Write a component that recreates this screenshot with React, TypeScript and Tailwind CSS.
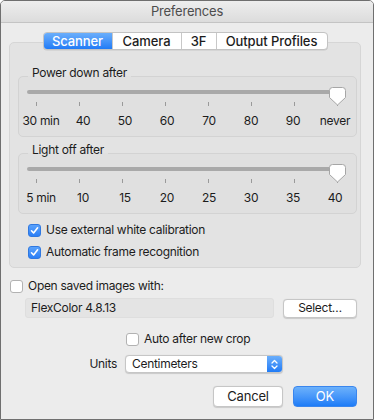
import React from 'react'

const powerLabels = ['30 min', '40', '50', '60', '70', '80', '90', 'never']
const lightLabels = ['5 min', '10', '15', '20', '25', '30', '35', '40']

function Thumb() {
  return (
    <svg className="absolute left-[302px] top-[3px]" width="17" height="19" viewBox="0 0 17 19">
      <path
        d="M3.5 0.5 H13.5 A3 3 0 0 1 16.5 3.5 V10.5 L8.5 18 L0.5 10.5 V3.5 A3 3 0 0 1 3.5 0.5 Z"
        fill="#ffffff"
        stroke="#a6a6a6"
        strokeWidth="1"
      />
    </svg>
  )
}

function SliderGroup({ title, labels }: { title: string; labels: string[] }) {
  return (
    <fieldset className="ml-[8px] mr-[4px] border border-[#d3d3d3] rounded-[5px] bg-[#e0e0e0] pb-[7px]">
      <legend className="ml-[9px] px-[4px] leading-[10px] pb-[6px]">{title}</legend>
      {/* track */}
      <div className="relative h-[16px] flex items-center ml-[8px] w-[314px]">
        <div className="h-[4px] w-full rounded-full bg-[#a9a9a9]" />
        <Thumb />
      </div>
      {/* ticks */}
      <div className="mt-[2px] ml-[17px] flex gap-[42px] h-[4px]">
        {labels.map((l) => (
          <div key={l} className="w-px h-full bg-[#9a9a9a]" />
        ))}
      </div>
      {/* labels */}
      <div className="mt-[7px] ml-[1px] grid grid-cols-[repeat(8,42px)] leading-[16px]">
        {labels.map((l) => (
          <div key={l} className="text-center whitespace-nowrap">{l}</div>
        ))}
      </div>
    </fieldset>
  )
}

function Checkbox({ checked }: { checked?: boolean }) {
  if (checked) {
    return (
      <div className="w-[13px] h-[13px] rounded-[3px] bg-gradient-to-b from-[#5aa2fb] to-[#2a7ef6] border border-[#2f78e0] flex items-center justify-center shrink-0">
        <svg width="9" height="9" viewBox="0 0 9 9">
          <path d="M1.5 4.8 L3.6 7 L7.6 1.8" fill="none" stroke="#fff" strokeWidth="1.6" strokeLinecap="round" strokeLinejoin="round" />
        </svg>
      </div>
    )
  }
  return <div className="w-[13px] h-[13px] rounded-[3px] bg-white border border-[#b2b2b2] shrink-0" />
}

export default function App() {
  return (
    <div className="w-[374px] h-[420px] bg-[#ececec] border border-[#6f6f6f] rounded-t-[5px] overflow-hidden flex flex-col font-['Inter','Noto_Sans',sans-serif] text-[12px] tracking-[-0.3px] text-[#1c1c1c]">
      {/* title bar */}
      <div className="h-[22px] shrink-0 bg-gradient-to-b from-[#eeeeee] to-[#dcdcdc] border-b border-[#c4c4c4] flex items-center justify-center text-[13px] tracking-[-0.2px] text-[#4d4d4d]">
        Preferences
      </div>

      {/* tab panel */}
      <div className="mt-[19px] ml-[8px] w-[352px] h-[226px] shrink-0 border border-[#d6d6d6] rounded-[5px] bg-[#e3e3e3]">
        <div className="-mt-[11px] flex justify-center">
          <div className="flex h-[18px] rounded-[4px] border border-[#c3c3c3] bg-white overflow-hidden font-medium text-[13px] tracking-[-0.1px] leading-[16px] shadow-[0_0.5px_0.5px_rgba(0,0,0,0.12)]">
            <div className="w-[68px] flex items-center justify-center text-white bg-gradient-to-b from-[#6aaefb] to-[#1f7bf6]">Scanner</div>
            <div className="w-[69px] flex items-center justify-center border-l border-[#c8c8c8]">Camera</div>
            <div className="w-[35px] flex items-center justify-center border-l border-[#c8c8c8]">3F</div>
            <div className="w-[111px] flex items-center justify-center border-l border-[#c8c8c8]">Output Profiles</div>
          </div>
        </div>

        <div className="mt-[18px]">
          <SliderGroup title="Power down after" labels={powerLabels} />
        </div>
        <div className="mt-[8px]">
          <SliderGroup title="Light off after" labels={lightLabels} />
        </div>

        <div className="mt-[8px] ml-[18px] flex flex-col gap-[6px]">
          <div className="flex items-center gap-[5px] h-[16px]">
            <Checkbox checked />
            <span>Use external white calibration</span>
          </div>
          <div className="flex items-center gap-[5px] h-[16px]">
            <Checkbox checked />
            <span>Automatic frame recognition</span>
          </div>
        </div>
      </div>

      {/* open with */}
      <div className="mt-[10px] ml-[9px] flex items-center gap-[5px] h-[16px]">
        <Checkbox />
        <span>Open saved images with:</span>
      </div>
      <div className="mt-[4px] ml-[24px] flex items-center gap-[9px]">
        <div className="w-[249px] h-[20px] rounded-[3px] bg-[#e4e4e4] border border-[#dedede] flex items-center pl-[5px]">
          FlexColor 4.8.13
        </div>
        <button className="w-[74px] h-[19px] rounded-[4px] bg-white border border-[#c6c6c6] shadow-[0_0.5px_1px_rgba(0,0,0,0.15)] flex items-center justify-center leading-[16px]">
          Select…
        </button>
      </div>

      <div className="mt-[13px] ml-[125px] flex items-center gap-[5px] h-[16px]">
        <Checkbox />
        <span>Auto after new crop</span>
      </div>

      {/* units */}
      <div className="mt-[8px] ml-[84px] flex items-center gap-[8px]">
        <span className="w-[32px] text-right">Units</span>
        <div className="w-[158px] h-[18px] rounded-[4px] bg-white border border-[#c6c6c6] shadow-[0_0.5px_1px_rgba(0,0,0,0.15)] flex items-center overflow-hidden">
          <span className="flex-1 pl-[6px] leading-[16px]">Centimeters</span>
          <div className="w-[15px] h-full bg-gradient-to-b from-[#6aaefb] to-[#1f7bf6] flex items-center justify-center">
            <svg width="7" height="11" viewBox="0 0 7 11">
              <path d="M1 4 L3.5 1.5 L6 4 M1 7 L3.5 9.5 L6 7" fill="none" stroke="#fff" strokeWidth="1.3" strokeLinecap="round" strokeLinejoin="round" />
            </svg>
          </div>
        </div>
      </div>

      {/* buttons */}
      <div className="mt-[13px] mr-[16px] flex justify-end gap-[10px] text-[13px] tracking-[-0.2px]">
        <button className="w-[70px] h-[21px] rounded-[4px] bg-white border border-[#c6c6c6] shadow-[0_0.5px_1px_rgba(0,0,0,0.15)] flex items-center justify-center">
          Cancel
        </button>
        <button className="w-[64px] h-[21px] rounded-[4px] bg-gradient-to-b from-[#6cb1fb] to-[#1c7cf7] border border-[#3a86ee] text-white flex items-center justify-center">
          OK
        </button>
      </div>
    </div>
  )
}
